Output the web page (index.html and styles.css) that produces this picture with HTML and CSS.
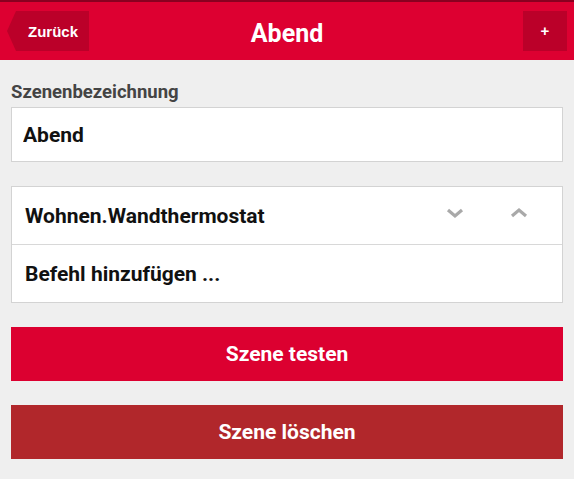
FILE: index.html
```html
<!DOCTYPE html>
<html>
<head>
  <title>Szene bearbeiten</title>
  <link rel="stylesheet" href="styles.css">
</head>
<body>

  <div class="kopf">
    <a class="zurueck" href="#">Zurück</a>
    <h1>Abend</h1>
    <a class="plus" href="#">+</a>
  </div>

  <div class="inhalt">
    <label for="name">Szenenbezeichnung</label>
    <input type="text" id="name" value="Abend">

    <ul class="befehle">
      <li>
        <span class="befehl">Wohnen.Wandthermostat</span>
        <span class="pfeile">
          <svg width="18" height="12" viewBox="0 0 18 12"><path d="M2 3 L9 9 L16 3" fill="none" stroke="#a9a9a9" stroke-width="3.2"/></svg>
          <svg width="18" height="12" viewBox="0 0 18 12"><path d="M2 9 L9 3 L16 9" fill="none" stroke="#a9a9a9" stroke-width="3.2"/></svg>
        </span>
      </li>
      <li><span class="befehl">Befehl hinzufügen ...</span></li>
    </ul>

    <button class="knopf testen">Szene testen</button>
    <button class="knopf loeschen">Szene löschen</button>
  </div>

</body>
</html>
```

FILE: styles.css
```css
body {
  margin: 0;
  background-color: #efefef;
  font-family: Roboto, "Liberation Sans", sans-serif;
}

/* Kopfleiste */
.kopf {
  height: 58px;
  border-top: 2px solid #8a0020;
  background-color: #dd0031;
  display: flex;
  align-items: center;
  justify-content: space-between;
  padding: 0 7px;
}

.kopf h1 {
  margin: 4px 0 0 0;
  color: #fff;
  font-size: 25px;
  font-weight: bold;
  position: absolute;
  left: 0;
  right: 0;
  text-align: center;
  pointer-events: none;
}

.zurueck {
  position: relative;
  display: flex;
  align-items: center;
  height: 40px;
  margin-left: 9px;
  padding: 0 11px 0 12px;
  background-color: #bb0029;
  color: #fff;
  font-family: "Liberation Sans", Arial, sans-serif;
  font-weight: bold;
  font-size: 15px;
  text-decoration: none;
}

.zurueck::before {
  content: "";
  position: absolute;
  left: -9px;
  top: 0;
  border-top: 20px solid transparent;
  border-bottom: 20px solid transparent;
  border-right: 9px solid #bb0029;
}

.plus {
  display: flex;
  align-items: center;
  justify-content: center;
  width: 44px;
  height: 40px;
  margin-top: -1px;
  background-color: #bb0029;
  color: #fff;
  font-family: "Liberation Sans", Arial, sans-serif;
  font-weight: bold;
  font-size: 15px;
  text-decoration: none;
}

/* Inhalt */
.inhalt {
  padding: 21px 11px 0 11px;
  display: flex;
  flex-direction: column;
}

label {
  color: #444;
  font-size: 18.5px;
  font-weight: bold;
  margin-bottom: 4px;
}

input[type="text"] {
  height: 55px;
  box-sizing: border-box;
  border: 1px solid #d3d3d3;
  background-color: #fff;
  padding: 0 11px;
  font-family: Roboto, sans-serif;
  font-size: 21px;
  font-weight: bold;
  color: #111;
  margin: 0 0 24px 0;
}

.befehle {
  list-style: none;
  margin: 0 0 24px 0;
  padding: 0;
  background-color: #fff;
  border: 1px solid #d3d3d3;
}

.befehle li {
  height: 57px;
  display: flex;
  align-items: center;
  justify-content: space-between;
  padding: 0 34px 0 13px;
  font-size: 21px;
  font-weight: bold;
  color: #111;
}

.befehle li + li {
  border-top: 1px solid #d8d8d8;
}

.pfeile {
  display: flex;
  gap: 46px;
  margin-top: -5px;
}

.knopf {
  height: 54px;
  border: none;
  color: #fff;
  font-family: Roboto, sans-serif;
  font-size: 21px;
  font-weight: bold;
  cursor: pointer;
  margin-bottom: 24px;
}

.testen {
  background-color: #dc0030;
}

.loeschen {
  background-color: #b1272b;
}
```
